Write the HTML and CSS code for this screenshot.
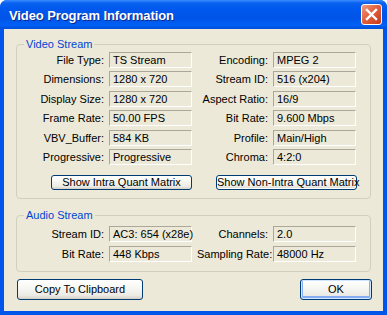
FILE: index.html
```html
<!DOCTYPE html>
<html lang="en">
<head>
  <meta charset="UTF-8" />
  <title>Video Program Information</title>
  <link rel="stylesheet" href="styles.css">
</head>
<body>

  <div class="window">
    <!-- Title bar -->
    <div class="titlebar">
      <span class="title">Video Program Information</span>
      <button class="close-btn" aria-label="Close">
        <svg width="13" height="13" viewBox="0 0 13 13">
          <path d="M2 2 L11 11 M11 2 L2 11" stroke="#fff" stroke-width="2.4" stroke-linecap="square"/>
        </svg>
      </button>
    </div>

    <div class="client">
      <!-- Video group -->
      <fieldset class="group video">
        <legend>Video Stream</legend>
        <div class="info-grid video-grid">
          <span class="label">File Type:</span><span class="field">TS Stream</span>
          <span class="label">Encoding:</span><span class="field">MPEG 2</span>

          <span class="label">Dimensions:</span><span class="field">1280 x 720</span>
          <span class="label">Stream ID:</span><span class="field">516 (x204)</span>

          <span class="label">Display Size:</span><span class="field">1280 x 720</span>
          <span class="label">Aspect Ratio:</span><span class="field">16/9</span>

          <span class="label">Frame Rate:</span><span class="field">50.00 FPS</span>
          <span class="label">Bit Rate:</span><span class="field">9.600 Mbps</span>

          <span class="label">VBV_Buffer:</span><span class="field">584 KB</span>
          <span class="label">Profile:</span><span class="field">Main/High</span>

          <span class="label">Progressive:</span><span class="field">Progressive</span>
          <span class="label">Chroma:</span><span class="field">4:2:0</span>
        </div>
        <div class="matrix-row">
          <button class="btn matrix-btn">Show Intra Quant Matrix</button>
          <button class="btn matrix-btn focused">Show Non-Intra Quant Matrix</button>
        </div>
      </fieldset>

      <!-- Audio group -->
      <fieldset class="group audio">
        <legend>Audio Stream</legend>
        <div class="info-grid audio-grid">
          <span class="label">Stream ID:</span><span class="field">AC3: 654 (x28e)</span>
          <span class="label">Channels:</span><span class="field">2.0</span>

          <span class="label">Bit Rate:</span><span class="field">448 Kbps</span>
          <span class="label">Sampling Rate:</span><span class="field">48000 Hz</span>
        </div>
      </fieldset>

      <div class="actions">
        <button class="btn copy-btn">Copy To Clipboard</button>
        <button class="btn ok-btn">OK</button>
      </div>
    </div>
  </div>

</body>
</html>
```

FILE: styles.css
```css
body {
  margin: 0;
  background-color: #ffffff;
  font-family: 'Liberation Sans', Arial, sans-serif;
  font-size: 11px;
  color: #000;
}

.window {
  width: 387px;
  height: 315px;
  box-sizing: border-box;
  background-color: #0055ea;
  border-radius: 7px 7px 0 0;
  display: flex;
  flex-direction: column;
  overflow: hidden;
}

/* Title bar */
.titlebar {
  height: 29px;
  flex: none;
  display: flex;
  align-items: center;
  justify-content: space-between;
  padding: 0 5px 0 9px;
  background: linear-gradient(to bottom, #3b8cff 0, #0a62f0 3px, #0058ee 9px, #0054e6 18px, #0060f6 25px, #004fd8 29px);
}

.titlebar .title {
  color: #fff;
  font-weight: bold;
  font-size: 13px;
  letter-spacing: -0.1px;
  text-shadow: 1px 1px 0 #0b2a8c;
  padding-top: 1px;
}

.close-btn {
  width: 21px;
  height: 21px;
  padding: 0;
  border: 1px solid #fff;
  border-radius: 3px;
  background: linear-gradient(135deg, #f19c7f 0, #e0613f 45%, #c9391a 100%);
  display: flex;
  align-items: center;
  justify-content: center;
}

/* Client area */
.client {
  flex: 1;
  margin: 0 4px 4px 4px;
  background-color: #ece9d8;
  padding: 9px 12px 0 12px;
}

.group {
  margin: 0;
  padding: 0;
  border: 1px solid #d0d0bf;
  border-radius: 4px;
}

.group legend {
  color: #0046d5;
  margin-left: 7px;
  padding: 0 2px;
  line-height: 13px;
}

.info-grid {
  display: grid;
  grid-template-columns: 87px 83px 71px 83px;
  column-gap: 5px;
}

.video-grid {
  margin-top: 1px;
  grid-auto-rows: 16px;
  row-gap: 3.4px;
}

.audio-grid {
  margin-top: 4px;
  grid-auto-rows: 16px;
  row-gap: 4px;
}

.audio {
  margin-top: 10px;
  padding-bottom: 9px;
}

.label {
  text-align: right;
  line-height: 16px;
  white-space: nowrap;
}

.field {
  box-sizing: border-box;
  border-top: 1px solid #aca899;
  border-left: 1px solid #aca899;
  border-right: 1px solid #fff;
  border-bottom: 1px solid #fff;
  padding-left: 3px;
  line-height: 14px;
  white-space: nowrap;
}

/* Buttons */
.btn {
  font-family: 'Liberation Sans', Arial, sans-serif;
  font-size: 11px;
  color: #000;
  border: 1px solid #003c74;
  border-radius: 3px;
  background: linear-gradient(to bottom, #ffffff 0, #f7f7f3 40%, #ecebe6 80%, #d6d0c5 100%);
  padding: 0;
  white-space: nowrap;
}

.matrix-row {
  display: flex;
  gap: 24px;
  margin: 10px 0 8px 34px;
}

.matrix-btn {
  width: 141px;
  height: 15px;
  line-height: 13px;
}

.matrix-btn.focused {
  box-shadow: inset 0 0 0 1px #fff;
}

.actions {
  display: flex;
  justify-content: space-between;
  margin-top: 7px;
  padding-left: 1px;
}

.copy-btn {
  width: 126px;
  height: 21px;
}

.ok-btn {
  width: 72px;
  height: 21px;
  margin-right: -1px;
  box-shadow: inset 0 0 0 1px #cee7ff, inset 0 -1px 0 2px #89adf4;
}
```
